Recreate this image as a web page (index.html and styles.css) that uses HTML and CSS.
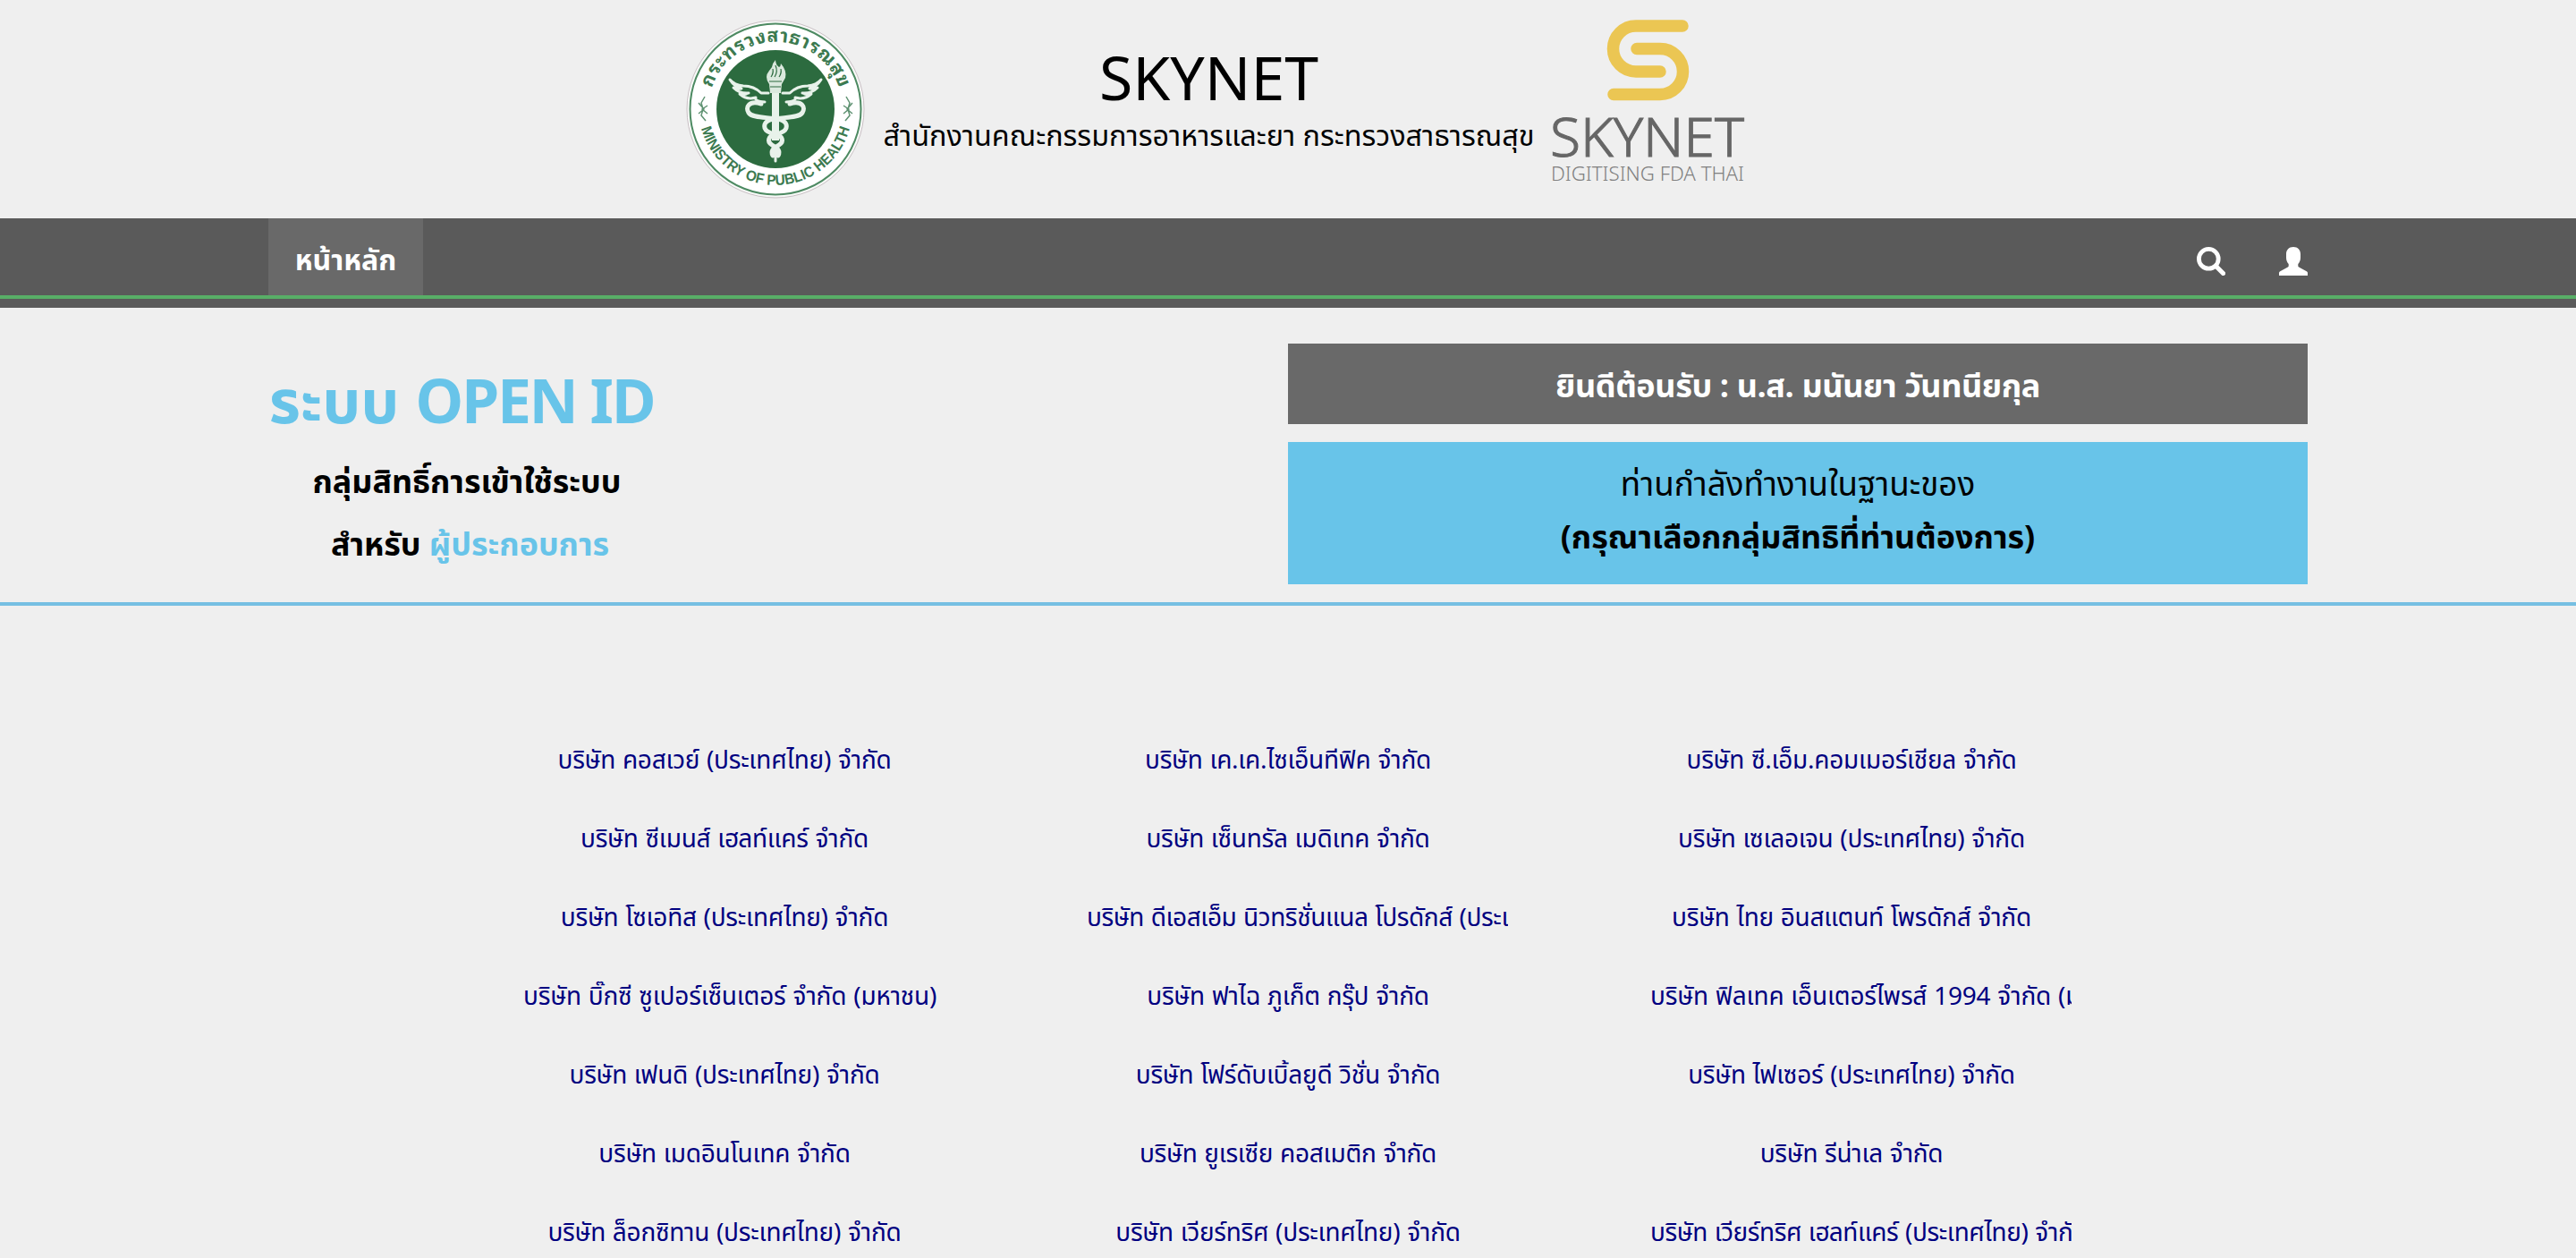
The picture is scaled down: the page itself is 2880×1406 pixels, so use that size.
FILE: index.html
```html
<!DOCTYPE html>
<html lang="th">
<head>
<meta charset="utf-8">
<title>SKYNET</title>
<link rel="stylesheet" href="styles.css">
</head>
<body>
<header class="masthead">
  <svg class="seal" viewBox="0 0 200 200" role="img" aria-label="กระทรวงสาธารณสุข">
    <defs>
      <path id="arc-top" d="M27.800 79.500A75 75 0 0 1 172.200 79.500"/>
      <path id="arc-bottom" d="M16.100 117.800A86 86 0 0 0 183.900 117.800"/>
    </defs>
    <circle cx="100" cy="100" r="99" fill="#f8faf8" stroke="#c9bfc4" stroke-width="1"/>
    <circle cx="100" cy="100" r="95.500" fill="#fff" stroke="#4d8a62" stroke-width="2"/>
    <circle cx="100" cy="100" r="66" fill="#2c6b3f"/>
    <text class="seal-th"><textPath href="#arc-top" startOffset="50%" text-anchor="middle" textLength="188">กระทรวงสาธารณสุข</textPath></text>
    <text class="seal-en"><textPath href="#arc-bottom" startOffset="50%" text-anchor="middle" textLength="224" lengthAdjust="spacingAndGlyphs">MINISTRY OF PUBLIC HEALTH</textPath></text>
    <g stroke="#5f9272" stroke-width="1.500" fill="none">
      <path d="M21 86l-4 7 2 7-2 7 5 6M14 93l6 7-6 5M24 96l-6 4 6 5"/>
      <path d="M179 86l4 7-2 7 2 7-5 6M186 93l-6 7 6 5M176 96l6 4-6 5"/>
    </g>
    <g fill="none" stroke="#e8f2ea" stroke-linecap="round" stroke-linejoin="round">
      <path stroke-width="8" stroke-linecap="butt" d="M100 80V135M100 140v10"/>
      <path stroke-width="5" d="M84 94C70 90 66 98 70 104C76 113 108 106 112 117C114 124 106 127 100 128C92 130 90 136 96 140S106 146 103 152"/>
      <path stroke-width="5" d="M116 94C130 90 134 98 130 104C124 113 92 106 88 117C86 124 94 127 100 128C108 130 110 136 104 140S94 146 97 152"/>
      <path stroke-width="3" d="M100 150v8"/>
      <path stroke-width="3" d="M92 82H84Q76 74 64 74Q54 73 49 67Q54 75 62 77Q56 78 53 76Q60 83 70 82Q64 85 60 83Q68 90 78 87Q76 91 88 92M108 82H116Q124 74 136 74Q146 73 151 67Q146 75 138 77Q144 78 147 76Q140 83 130 82Q136 85 140 83Q132 90 122 87Q124 91 112 92"/>
    </g>
    <path fill="#dbe9de" d="M94 82l-1-10q-6-8 0-15l3-4q1-5 4-8q0 5 4 8q2-1 2-4q7 8 5 16l-4 7-1 10z"/>
    <path fill="none" stroke="#2c6b3f" stroke-width="1.200" d="M95 64q3-4 2-9M99 64q4-6 1-13M104 64q3-4 2-9M93 69h14M94 75h12"/>
  </svg>
  <div class="title-block">
    <h1 class="title">SKYNET</h1>
    <p class="subtitle">สำนักงานคณะกรรมการอาหารและยา กระทรวงสาธารณสุข</p>
  </div>
  <svg class="brand" viewBox="0 0 214 200" role="img" aria-label="SKYNET DIGITISING FDA THAI">
    <path fill="none" stroke="#ebc653" stroke-width="13.500" stroke-linecap="round" d="M145 7H93a25.500 25.500 0 0 0 0 51h27M94 32.500h26a25.500 25.500 0 0 1 0 51H68"/>
    <text class="brand-name" x="-3" y="153" textLength="217" lengthAdjust="spacingAndGlyphs">SKYNET</text>
    <text class="brand-tag" x="-2" y="179.500" textLength="216" lengthAdjust="spacingAndGlyphs">DIGITISING FDA THAI</text>
  </svg>
</header>

<nav class="navbar">
  <div class="navbar-inner">
    <a class="nav-item" href="#">หน้าหลัก</a>
    <div class="nav-icons">
      <svg width="32" height="32" viewBox="0 0 32 32" aria-label="ค้นหา"><circle cx="13.300" cy="13.300" r="10.900" fill="none" stroke="#fff" stroke-width="4.800"/><path d="M21.500 21.500L29.500 29.500" stroke="#fff" stroke-width="5.200" stroke-linecap="round"/></svg>
      <svg width="32" height="32" viewBox="0 0 32 32" aria-label="ผู้ใช้"><path fill="#fff" d="M16 0C21 0 24 3.500 24 8v4c0 3-1.200 5.500-2.700 7v2.300c0 .6.300 1 .8 1.300l8.700 4.700c.8.400 1.200 1 1.200 1.700v3H0v-3c0-.7.400-1.300 1.200-1.700l8.700-4.700c.5-.3.800-.7.800-1.300V19C9.200 17.500 8 15 8 12V8c0-4.500 3-8 8-8z"/></svg>
    </div>
  </div>
</nav>

<section class="intro">
  <div class="intro-inner">
    <div class="system">
      <h2 class="system-name">ระบบ <span class="latin">OPEN ID</span></h2>
      <p class="system-line">กลุ่มสิทธิ์การเข้าใช้ระบบ</p>
      <p class="system-line audience">สำหรับ <span class="accent">ผู้ประกอบการ</span></p>
    </div>
    <div class="panels">
      <div class="welcome">ยินดีต้อนรับ : น.ส. มนันยา วันทนียกุล</div>
      <div class="role">
        <p class="role-lead">ท่านกำลังทำงานในฐานะของ</p>
        <p class="role-hint">(กรุณาเลือกกลุ่มสิทธิที่ท่านต้องการ)</p>
      </div>
    </div>
  </div>
</section>

<main class="companies">
  <a class="company">บริษัท คอสเวย์ (ประเทศไทย) จำกัด</a>
  <a class="company">บริษัท เค.เค.ไซเอ็นทีฟิค จำกัด</a>
  <a class="company">บริษัท ซี.เอ็ม.คอมเมอร์เชียล จำกัด</a>
  <a class="company">บริษัท ซีเมนส์ เฮลท์แคร์ จำกัด</a>
  <a class="company">บริษัท เซ็นทรัล เมดิเทค จำกัด</a>
  <a class="company">บริษัท เซเลอเจน (ประเทศไทย) จำกัด</a>
  <a class="company">บริษัท โซเอทิส (ประเทศไทย) จำกัด</a>
  <a class="company long tight">บริษัท ดีเอสเอ็ม นิวทริชั่นแนล โปรดักส์ (ประเทศไทย) จำกัด</a>
  <a class="company">บริษัท ไทย อินสแตนท์ โพรดักส์ จำกัด</a>
  <a class="company long">บริษัท บิ๊กซี ซูเปอร์เซ็นเตอร์ จำกัด (มหาชน)</a>
  <a class="company">บริษัท ฟาไฉ ภูเก็ต กรุ๊ป จำกัด</a>
  <a class="company long">บริษัท ฟิลเทค เอ็นเตอร์ไพรส์ 1994 จำกัด (มหาชน)</a>
  <a class="company">บริษัท เฟนดิ (ประเทศไทย) จำกัด</a>
  <a class="company">บริษัท โฟร์ดับเบิ้ลยูดี วิชั่น จำกัด</a>
  <a class="company">บริษัท ไฟเซอร์ (ประเทศไทย) จำกัด</a>
  <a class="company">บริษัท เมดอินโนเทค จำกัด</a>
  <a class="company">บริษัท ยูเรเซีย คอสเมติก จำกัด</a>
  <a class="company">บริษัท รีน่าเล จำกัด</a>
  <a class="company">บริษัท ล็อกซิทาน (ประเทศไทย) จำกัด</a>
  <a class="company">บริษัท เวียร์ทริศ (ประเทศไทย) จำกัด</a>
  <a class="company long tight">บริษัท เวียร์ทริศ เฮลท์แคร์ (ประเทศไทย) จำกัด</a>
</main>
</body>
</html>
```
FILE: styles.css
```css
* { box-sizing: border-box; }
body {
  margin: 0;
  height: 1406px;
  overflow: hidden;
  background: #efefef;
  color: #000;
  font-family: "Noto Sans Thai", "Noto Sans", sans-serif;
  font-size: 28px;
}
h1, h2, p { margin: 0; }

.masthead {
  height: 244px;
  padding: 22px 0 0 767px;
  display: flex;
  align-items: flex-start;
}
.seal { width: 200px; height: 200px; flex: none; overflow: visible; }
.seal-th { font: 700 21px "Noto Sans Thai Looped", "Noto Sans Thai", sans-serif; fill: #3c7a50; }
.seal-en { font: 700 16.500px "Liberation Sans", sans-serif; fill: #3c7a50; }
.title-block { width: 769px; flex: none; padding-top: 24px; text-align: center; white-space: nowrap; }
.title { font-size: 68px; line-height: 92px; font-weight: 400; }
.subtitle { margin-top: -8px; font-size: 32.400px; line-height: 48px; }
.brand { width: 214px; height: 200px; flex: none; overflow: visible; }
.brand-name { font: 300 60px "Noto Sans", sans-serif; fill: #666; stroke: #666; stroke-width: 1px; }
.brand-tag { font: 300 22px "Noto Sans", sans-serif; fill: #808080; }

.navbar {
  height: 100px;
  background: linear-gradient(#5a5a5a 86px, #58ae67 86px, #58ae67 90px, #5a5a5a 90px);
}
.navbar-inner {
  width: 2280px;
  height: 86px;
  margin: 0 auto;
  display: flex;
  justify-content: space-between;
  align-items: center;
}
.nav-item {
  width: 173px;
  height: 86px;
  line-height: 96px;
  background: #696969;
  color: #fff;
  font-size: 32px;
  font-weight: 700;
  text-align: center;
  text-decoration: none;
}
.nav-icons { display: flex; gap: 60px; padding-top: 10px; }
.nav-icons svg { display: block; }

.intro { height: 333px; border-bottom: 4px solid #76bfe2; }
.intro-inner {
  width: 2280px;
  margin: 0 auto;
  padding-top: 40px;
  display: flex;
  justify-content: space-between;
}
.system { width: 432px; padding-top: 20px; white-space: nowrap; text-align: center; }
.system-name { font-size: 68px; line-height: 98px; font-weight: 700; color: #68c4e9; }
.latin { letter-spacing: -2.500px; }
.system-line { margin-top: 3px; font-size: 35.800px; line-height: 70px; padding-left: 12px; font-weight: 700; }
.system-line.audience { margin-top: 0; padding-left: 19px; }
.accent { color: #68c4e9; }
.panels { width: 1140px; display: flex; flex-direction: column; gap: 20px; text-align: center; }
.welcome {
  height: 90px;
  line-height: 98px;
  background: #696969;
  color: #fff;
  font-size: 36px;
  font-weight: 700;
  letter-spacing: -0.400px;
}
.role { height: 159px; padding-top: 20px; background: #68c4e9; line-height: 59px; font-size: 35.900px; }
.role-lead { font-size: 36.800px; }
.role-hint { font-weight: 700; }

.companies {
  width: 1752px;
  margin: 130px auto 0;
  display: grid;
  grid-template-columns: repeat(3, 492px);
  grid-auto-rows: 88px;
  column-gap: 138px;
}
.company {
  height: 88px;
  line-height: 88px;
  padding: 0 20px;
  overflow: hidden;
  color: #000080;
  text-align: center;
  white-space: nowrap;
  letter-spacing: -0.250px;
  word-spacing: 0.800px;
}
.company.long { text-align: left; padding-left: 21px; letter-spacing: -0.180px; }
.company.tight { letter-spacing: -0.400px; }
```
